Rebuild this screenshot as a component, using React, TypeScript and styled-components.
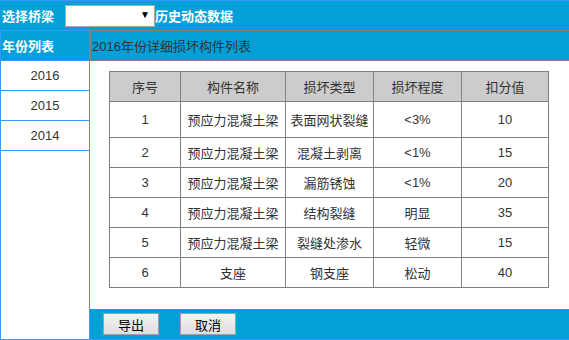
import React from "react";
import styled, { createGlobalStyle } from "styled-components";

const GlobalStyle = createGlobalStyle`
  html, body {
    margin: 0;
    padding: 0;
    background: #fff;
  }
  body {
    font-family: "Liberation Sans", "Noto Sans CJK SC", sans-serif;
    font-size: 13px;
    color: #333;
  }
`;

const BLUE = "#039fd7";
const LIGHT = "#3399ff";
const GRAY = "#808080";

const Page = styled.div`
  width: 569px;
  height: 340px;
  display: flex;
  flex-direction: column;
  overflow: hidden;
`;

const TopBar = styled.header`
  height: 29px;
  border-top: 1px solid ${LIGHT};
  background: ${BLUE};
  display: flex;
  align-items: center;
  padding-left: 2px;
  color: #fff;
  font-weight: bold;
`;

const Label = styled.span`
  white-space: nowrap;
`;

const SelectWrap = styled.div`
  position: relative;
  margin-left: 11px;
  width: 90px;
  height: 22px;
`;

const Select = styled.select`
  appearance: none;
  width: 90px;
  height: 22px;
  box-sizing: border-box;
  border: 1px solid #a9a9a9;
  background: #fff;
  margin: 0;
  font: inherit;
`;

const Arrow = styled.span`
  position: absolute;
  right: 5px;
  top: 4px;
  font-size: 10px;
  color: #000;
  pointer-events: none;
`;

const Main = styled.div`
  flex: 1;
  display: flex;
  min-height: 0;
`;

const Sidebar = styled.aside`
  width: 88px;
  border: 1px solid ${LIGHT};
  display: flex;
  flex-direction: column;
`;

const SideHead = styled.div`
  height: 29px;
  border-bottom: 1px solid ${LIGHT};
  background: ${BLUE};
  color: #fff;
  font-weight: bold;
  display: flex;
  align-items: center;
  padding-left: 1px;
`;

const YearItem = styled.div`
  height: 29px;
  border-bottom: 1px solid ${LIGHT};
  display: flex;
  align-items: center;
  justify-content: center;
  color: #333;
`;

const Panel = styled.section`
  flex: 1;
  display: flex;
  flex-direction: column;
  border-bottom: 1px solid ${LIGHT};
`;

const PanelHead = styled.div`
  height: 29px;
  border-top: 1px solid ${GRAY};
  border-bottom: 1px solid ${GRAY};
  border-left: 1px solid ${GRAY};
  background: ${BLUE};
  color: #333;
  display: flex;
  align-items: center;
  padding-left: 1px;
`;

const PanelBody = styled.div`
  flex: 1;
  padding: 10px 0 0 19px;
`;

const Table = styled.table`
  border-collapse: collapse;
  width: 440px;
  table-layout: fixed;
  color: #333;

  th,
  td {
    border: 1px solid ${GRAY};
    text-align: center;
    padding: 0;
    font-weight: normal;
  }
  th {
    background: #ccc;
    height: 29px;
  }
`;

const Row = styled.tr<{ $tall?: boolean }>`
  td {
    height: ${(p) => (p.$tall ? 35 : 29)}px;
  }
`;

const Footer = styled.footer`
  height: 30px;
  background: ${BLUE};
  display: flex;
  align-items: center;
  gap: 21px;
  padding-left: 13px;
`;

const Button = styled.button`
  width: 56px;
  height: 22px;
  border: 1px solid #a0a0a0;
  background: linear-gradient(#f4f4f4, #dedede);
  font: inherit;
  color: #000;
  padding: 0;
`;

const rows = [
  ["1", "预应力混凝土梁", "表面网状裂缝", "<3%", "10"],
  ["2", "预应力混凝土梁", "混凝土剥离", "<1%", "15"],
  ["3", "预应力混凝土梁", "漏筋锈蚀", "<1%", "20"],
  ["4", "预应力混凝土梁", "结构裂缝", "明显", "35"],
  ["5", "预应力混凝土梁", "裂缝处渗水", "轻微", "15"],
  ["6", "支座", "钢支座", "松动", "40"],
];

const years = ["2016", "2015", "2014"];

export default function App(): JSX.Element {
  return (
    <Page>
      <GlobalStyle />
      <TopBar>
        <Label>选择桥梁</Label>
        <SelectWrap>
          <Select defaultValue="">
            <option value=""></option>
          </Select>
          <Arrow>▼</Arrow>
        </SelectWrap>
        <Label>历史动态数据</Label>
      </TopBar>
      <Main>
        <Sidebar>
          <SideHead>年份列表</SideHead>
          {years.map((y) => (
            <YearItem key={y}>{y}</YearItem>
          ))}
        </Sidebar>
        <Panel>
          <PanelHead>2016年份详细损坏构件列表</PanelHead>
          <PanelBody>
            <Table>
              <colgroup>
                <col style={{ width: 71 }} />
                <col style={{ width: 105 }} />
                <col style={{ width: 88 }} />
                <col style={{ width: 88 }} />
                <col style={{ width: 87 }} />
              </colgroup>
              <thead>
                <tr>
                  <th>序号</th>
                  <th>构件名称</th>
                  <th>损坏类型</th>
                  <th>损坏程度</th>
                  <th>扣分值</th>
                </tr>
              </thead>
              <tbody>
                {rows.map((r, i) => (
                  <Row key={r[0]} $tall={i === 0}>
                    {r.map((c, j) => (
                      <td key={j}>{c}</td>
                    ))}
                  </Row>
                ))}
              </tbody>
            </Table>
          </PanelBody>
          <Footer>
            <Button>导出</Button>
            <Button>取消</Button>
          </Footer>
        </Panel>
      </Main>
    </Page>
  );
}
